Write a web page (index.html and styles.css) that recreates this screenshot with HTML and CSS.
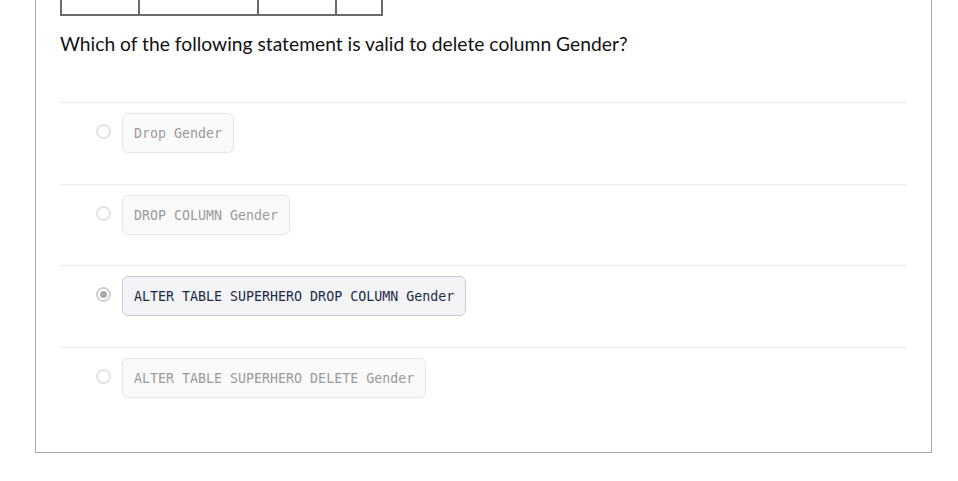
FILE: index.html
```html
<!DOCTYPE html>
<html>
<head>
<meta charset="utf-8">
<link rel="stylesheet" href="styles.css">
</head>
<body>
<div class="card">
  <table class="data">
    <tr><td class="c1"></td><td class="c2"></td><td class="c3"></td><td class="c4"></td></tr>
  </table>
  <p class="question">Which of the following statement is valid to delete column Gender?</p>
  <ul class="options">
    <li class="option"><span class="radio"></span><code class="answer">Drop Gender</code></li>
    <li class="option"><span class="radio"></span><code class="answer">DROP COLUMN Gender</code></li>
    <li class="option selected"><span class="radio"></span><code class="answer">ALTER TABLE SUPERHERO DROP COLUMN Gender</code></li>
    <li class="option"><span class="radio"></span><code class="answer">ALTER TABLE SUPERHERO DELETE Gender</code></li>
  </ul>
</div>
</body>
</html>
```
FILE: styles.css
```css
html, body {
  margin: 0;
  padding: 0;
  background: #ffffff;
}
body {
  font-family: Lato, "Open Sans", sans-serif;
}
.card {
  margin: -38px 0 0 35px;
  width: 897px;
  box-sizing: border-box;
  border: 1px solid #a9a9a9;
  border-top: 0;
  padding: 0 24px 24px 24px;
  background: #fff;
}
.data {
  border-collapse: collapse;
  border: 2px solid #6b6b6b;
  margin: 0;
}
.data td {
  border: 2px solid #6b6b6b;
  height: 50px;
  padding: 0;
}
.c1 { width: 76px; }
.c2 { width: 117px; }
.c3 { width: 76px; }
.c4 { width: 44px; }
.question {
  margin: 16px 0 0 0;
  font-size: 19.25px;
  line-height: 24px;
  color: #111;
}
.options {
  list-style: none;
  margin: 46px 0 0 0;
  padding: 0;
}
.option {
  display: flex;
  align-items: center;
  border-top: 1px solid #ebebeb;
  padding: 10px 0 30.5px 36px;
}
.radio {
  width: 15px;
  height: 15px;
  box-sizing: border-box;
  border: 2px solid #e2e2e2;
  border-radius: 50%;
  margin: -3px 11px 0 0;
  flex: none;
  display: flex;
  align-items: center;
  justify-content: center;
}
.selected .radio {
  border-color: #cfcfd2;
}
.selected .radio::after {
  content: "";
  width: 7px;
  height: 7px;
  border-radius: 50%;
  background: #a9a9ad;
}
.answer {
  font-family: "DejaVu Sans Mono", "Liberation Mono", monospace;
  font-size: 13.3px;
  line-height: 18px;
  color: #9a9a9a;
  background: #fafafa;
  border: 1px solid #e6e6e6;
  border-radius: 6px;
  padding: 11px 11px 9px;
}
.selected .answer {
  color: #1e2b48;
  background: #f3f4f5;
  border-color: #c8ccd2;
}
```
